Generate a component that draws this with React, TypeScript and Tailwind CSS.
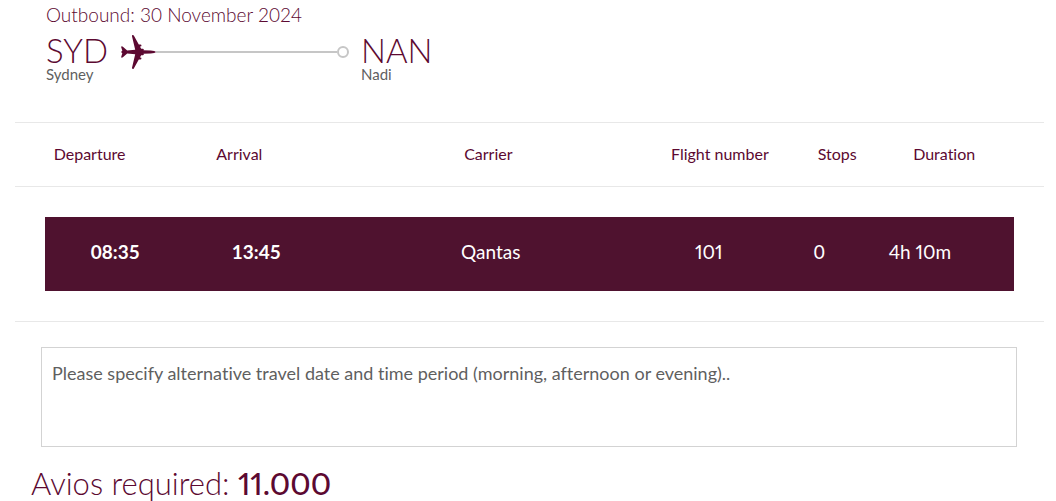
const columns = ["Departure", "Arrival", "Carrier", "Flight number", "Stops", "Duration"];

const flights = [
    { departure: "08:35", arrival: "13:45", carrier: "Qantas", number: "101", stops: "0", duration: "4h 10m" },
];

// Header and rows have different insets but share the same proportions
const rowGrid = "grid grid-cols-[145fr_146fr_338fr_112fr_116fr_92fr_51fr] items-center";

function PlaneIcon() {
    return (
        <svg viewBox="0 0 36 36" className="w-9 h-9 shrink-0 fill-[#5c0931]" aria-hidden="true">
            <path d="M1 12.6h1.6l4.6 3.8 8-.6L12 2.2c-.2-1.2 1.2-1.6 1.8-.6l5 8.8h1.6c1.4 0 1.4 1.9.2 2h-.7l1.3 2.4h1.6c1.2 0 1.3 1.2.6 1.5l7.2.3c2.6.2 5.1.7 5.4 1.4-.3.7-2.8 1.2-5.4 1.4l-7.2.3c.7.3.6 1.5-.6 1.5h-1.6l-1.3 2.4h.7c1.2.1 1.2 2-.2 2h-1.6l-5 8.8c-.6 1-2 .6-1.8-.6l3.2-13.6-8-.6-4.6 3.8H1l1.3-4.2L1 18l1.3-1.2z" />
        </svg>
    );
}

function Airport({ code, city }: { code: string; city: string }) {
    return (
        <div className="text-[#5c0931]">
            <div className="text-[33px] leading-8 font-light">{code}</div>
            <div className="text-[15px] leading-4 text-[#5f5f5f]">{city}</div>
        </div>
    );
}

function Route() {
    return (
        <header className="px-[31px] pt-[3px] pb-10">
            <h2 className="text-[19px] leading-6 font-light text-[#5c0931]">Outbound: 30 November 2024</h2>
            <div className="mt-[7px] flex items-start">
                <Airport code="SYD" city="Sydney" />
                <div className="mx-3 flex items-center">
                    <PlaneIcon />
                    <span className="w-[181px] h-0.5 bg-[#c6c6c6]" />
                    <span className="w-3 h-3 rounded-full border-2 border-[#c6c6c6]" />
                </div>
                <Airport code="NAN" city="Nadi" />
            </div>
        </header>
    );
}

function FlightTable() {
    return (
        <table className="block">
            <thead className="block border-y border-[#e8e8e8] pt-[19px] pb-5">
                <tr className={rowGrid}>
                    {columns.map((label) => (
                        <th key={label} scope="col" className="text-base leading-6 font-normal text-[#5c0931] whitespace-nowrap">
                            {label}
                        </th>
                    ))}
                </tr>
            </thead>
            <tbody className="block border-b border-[#e8e8e8] p-[30px]">
                {flights.map((flight) => (
                    <tr key={flight.number} className={`${rowGrid} bg-[#4f122f] pt-[21px] pb-[25px] text-center text-[19px] leading-7 text-white`}>
                        <td className="font-bold">{flight.departure}</td>
                        <td className="font-bold">{flight.arrival}</td>
                        <td>{flight.carrier}</td>
                        <td className="proportional-nums">{flight.number}</td>
                        <td>{flight.stops}</td>
                        <td className="whitespace-nowrap proportional-nums">{flight.duration}</td>
                    </tr>
                ))}
            </tbody>
        </table>
    );
}

export default function App() {
    return (
        <main className="max-h-screen overflow-hidden bg-white pl-[15px] pr-3 font-['Lato',sans-serif] [font-variant-ligatures:none]">
            <Route />
            <FlightTable />

            <div className="pl-[26px] pr-[27px] pt-[25px]">
                <textarea
                    aria-label="Alternative travel date and time"
                    placeholder="Please specify alternative travel date and time period (morning, afternoon or evening).."
                    className="block w-full h-[100px] resize-none border border-[#d3d3d3] px-2.5 py-[11px] text-lg leading-7 text-[#5f5f5f] placeholder:text-[#5f5f5f] [font-variant-ligatures:none]"
                />
            </div>

            <p className="pl-4 pt-4 text-[31px] leading-10 font-light text-[#5c0931]">
                Avios required: <strong className="font-medium proportional-nums">11.000</strong>
            </p>
        </main>
    );
}
